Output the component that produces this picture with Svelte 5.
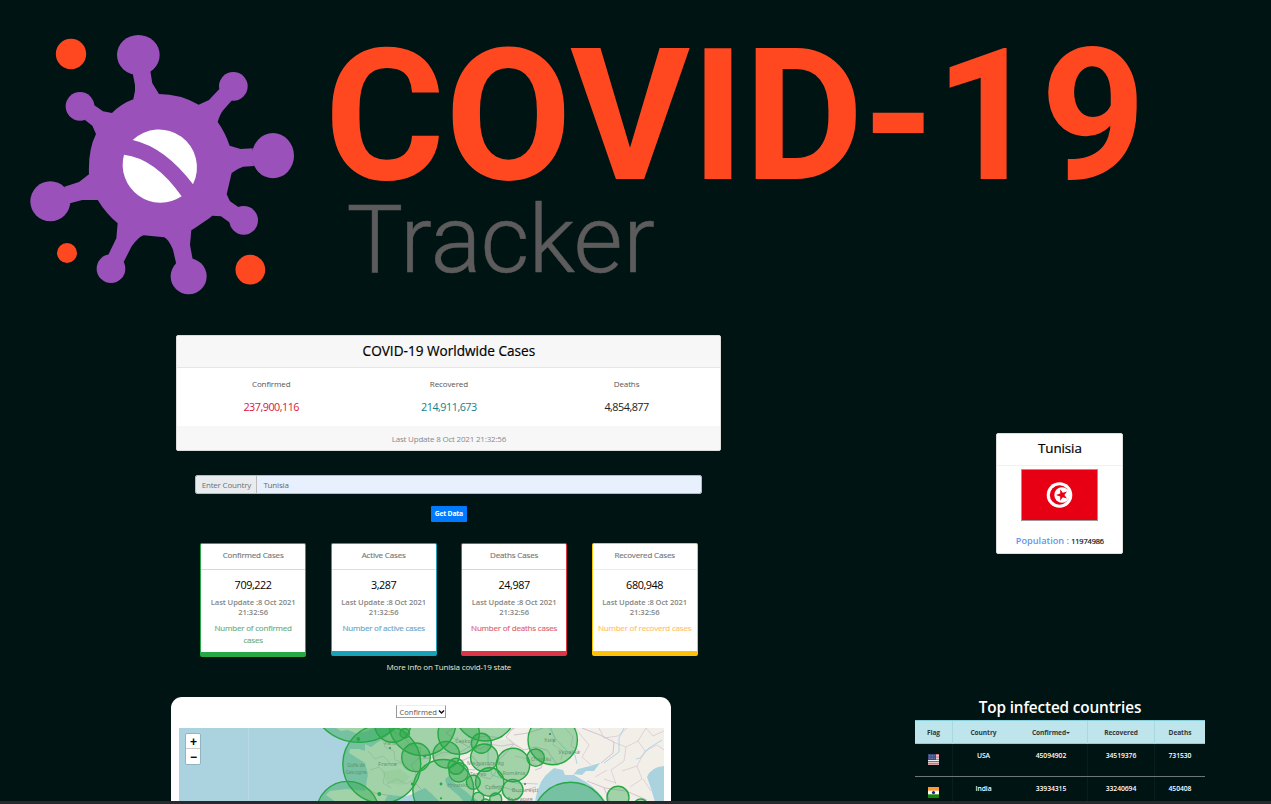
<script>
  const world = [
    { label: 'Confirmed', value: '237,900,116', tone: 'red' },
    { label: 'Recovered', value: '214,911,673', tone: 'teal' },
    { label: 'Deaths', value: '4,854,877', tone: 'dark' }
  ];
  const cards = [
    { title: 'Confirmed Cases', value: '709,222', note: 'Number of confirmed cases', tone: 'success' },
    { title: 'Active Cases', value: '3,287', note: 'Number of active cases', tone: 'info' },
    { title: 'Deaths Cases', value: '24,987', note: 'Number of deaths cases', tone: 'danger' },
    { title: 'Recovered Cases', value: '680,948', note: 'Number of recoverd cases', tone: 'warning' }
  ];
  const rows = [
    { flag: 'us', country: 'USA', confirmed: '45094902', recovered: '34519376', deaths: '731530' },
    { flag: 'in', country: 'India', confirmed: '33934315', recovered: '33240694', deaths: '450408' }
  ];
  // cx, cy, r
  const bubbles = [
    [359.3, 690.7, 51.6], [381.8, 764, 39], [347.7, 812.7, 31.3], [392.7, 724.3, 18], [422.3, 722, 33.6],
    [404.7, 733.3, 4.7], [416, 757.3, 14.3], [443.3, 790, 30.5], [458.7, 733.7, 20.7], [485.3, 710, 31],
    [446.3, 754.7, 13.3], [481.3, 743.3, 10], [484.3, 757.7, 13.7], [456, 766.3, 8], [458.7, 772.3, 9.7],
    [473.3, 782.3, 7], [478.3, 797.7, 5.5], [489.7, 782, 14.2], [495.7, 799, 6], [513, 765, 16.7],
    [512.7, 789.7, 10.3], [535.7, 757.7, 8.7], [552.7, 740, 24.7], [570.7, 820.3, 38], [618, 797.3, 11],
    [640.7, 806, 7], [485.5, 804, 5]
  ];
  const dots = [[358.3, 739, 1.9], [379.3, 794, 1.9], [424.7, 756.3, 1.4], [412.3, 784, 1.4], [441, 784, 1.4], [441, 798.3, 1.1]];
  const places = [
    ['France', 387.5, 765.5, 6], ['Paris', 390, 745, 5], ['Česko', 463, 743, 5.5], ['Magyarország', 485.5, 764.5, 5.5],
    ['România', 514, 775, 5.5], ['București', 525, 791.5, 6], ['Zagreb', 478, 775.5, 5], ['Hrvatska', 458, 787, 5],
    ['Србија', 494, 789, 5.5], ['Київ', 550, 741.5, 5.5], ['Україна', 569, 754, 5.8], ['Chișinău', 541, 761, 5],
    ['България', 520, 800.5, 5.5], ['Golfe de', 356, 767, 4.5], ['Gascogne', 356, 774, 4.5]
  ];
</script>

<div class="page">
  <header>
    <svg class="logo" viewBox="0 0 1271 335" width="1271" height="335" aria-label="COVID-19 Tracker">
      <g transform="translate(20 20) scale(.33333)">
        <g fill="#9a51ba">
          <path d="M338 160 L345 195 L345 212 L340 238 Q304 251 276 279 L249 274 L222 255 L195 300 L217 317 L228 342 Q204 390 207 463 L177 486 L133 500 L150 550 L187 540 H233 Q260 583 293 610 L289 655 L265 704 L311 726 L335 679 Q358 648 371 646 L433 652 Q445 657 459 689 L469 733 L518 718 L510 675 L514 631 C541 613 560 601 577 587 L603 589 L630 608 L655 561 L630 544 L620 523 L635 459 Q653 445 669 440 L702 438 L698 385 L662 387 L629 377 Q615 336 593 306 Q600 282 610 270 L636 241 L598 207 L567 240 L536 254 Q480 222 417 222 L397 190 L391 153 Z" />
          <ellipse cx="355" cy="105" rx="64" ry="60" /><circle cx="640" cy="199" r="43" />
          <ellipse cx="759" cy="407" rx="63" ry="68" />
          <circle cx="671" cy="601" r="43" /><circle cx="506" cy="769" r="54" />
          <circle cx="273" cy="746" r="43" /><circle cx="91" cy="544" r="60" />
          <circle cx="180" cy="259" r="43" />
        </g>
        <g fill="#ff4820">
          <circle cx="153" cy="102" r="45.5" /><circle cx="141" cy="699" r="30" /><circle cx="691" cy="749" r="44.5" />
        </g>
        <path d="M338 360 A114 114 0 0 1 519 493 Q435 382 338 360Z M312 404 Q405 415 485 529 A114 114 0 0 1 312 404Z" fill="#fff" />
      </g>
      <text class="brand" y="179" x="324.5 445 570 691 744 862.500 934.500 1040.500">COVID-19</text>
      <text class="sub" y="271.5" x="346.5 400 430.500 480.500 528.5 573.5 623">Tracker</text>
    </svg>
  </header>

  <main>
    <section class="left">
      <div class="world">
        <div class="world-head">COVID-19 Worldwide Cases</div>
        <div class="world-body">
          {#each world as w}
            <div class="stat"><span>{w.label}</span><b class={w.tone}>{w.value}</b></div>
          {/each}
        </div>
        <div class="world-foot">Last Update 8 Oct 2021 21:32:56</div>
      </div>
      <div class="search"><label for="country">Enter Country</label><div class="field" id="country">Tunisia</div></div>
      <button>Get Data</button>
      <div class="cards">
        {#each cards as c}
          <article class={c.tone}>
            <h3>{c.title}</h3>
            <div class="cbody">
              <strong>{c.value}</strong>
              <p class="upd">Last Update :8 Oct 2021 21:32:56</p>
              <p class="note">{c.note}</p>
            </div>
          </article>
        {/each}
      </div>
      <p class="more">More info on Tunisia covid-19 state</p>
    </section>
    <aside class="country">
      <h2>Tunisia</h2>
      <svg viewBox="0 0 77 52" width="77" height="52">
        <rect x=".5" y=".5" width="76" height="51" fill="#e70013" stroke="#999" />
        <circle cx="38.5" cy="26" r="12.8" fill="#fff" />
        <circle cx="38.5" cy="26" r="9.7" fill="#e70013" />
        <circle cx="41" cy="26" r="7.7" fill="#fff" />
        <path d="M35 26 L39.2 24.6 L39.2 20.2 L41.8 23.8 L46 22.4 L43.4 26 L46 29.6 L41.8 28.2 L39.2 31.8 L39.2 27.4Z" fill="#e70013" />
      </svg>
      <p><em>Population :</em> <span>11974986</span></p>
    </aside>
  </main>

  <div class="bottom">
    <section class="mapcard">
      <div class="select">Confirmed<svg width="7" height="6" viewBox="0 0 7 6"><path d="M1 1.5 L3.5 4 L6 1.5" fill="none" stroke="#111" stroke-width="1.5" /></svg></div>
      <div class="map">
        <svg viewBox="179 728 485 74" width="485" height="74">
          <rect x="179" y="728" width="485" height="74" fill="#aad3df" />
          <path d="M248.500 728V802" stroke="#b9dae4" stroke-width=".8" />
          <path fill="#f2efe9" d="M336 728 L341 731 L348 730 L355 733 L364 732 L374 728Z M378 742 L386 737 L392 732 L398 728 H664 V766 Q651 767 647 777 Q651 788 655 802 H606 Q598 790 586 782 Q577 777 573 774 L582 775 L586 771 L594 771 L600 763 L590 766 L578 769 L573 775 L565 775 L563 770 L554 768 L545 776 L541 782 L537 792 L535 802 H480 Q470 796 464 790 Q453 783 449 776 L445 779 L447 786 L459 796 L464 802 H440 L432 794 L425 788 L418 791 Q407 798 400 796 L388 795 L384 802 H336 L326 795 L330 791 L346 789 L365 791 L368 774 L365 763 L354 756 L349 753 L350 749 L359 749 L365 751 L365 744 L371 747Z" />
          <path fill="#e4eadb" d="M382 772 l18 -3 10 8 -8 8 -15 -2z M414 752 l22 -3 14 6 -20 5z M480 742l30 -3 10 8 -20 5z M398 745 l10 -6 8 6 -7 5z" />
          <g fill="none" stroke="#cdb5ca" stroke-width=".8">
            <path d="M393 731 L404 738 L411 745 L421 748 L419 758 L411 765 L416 773 L415 783 L421 789 M419 759 L432 758 L443 752 L457 754 L469 747 L480 749 L489 744 L502 746 L514 744 L524 750 L535 747 L545 758 L541 768 L535 770 M469 747 L458 741 L446 733 L453 728 M469 747 L475 738 L486 736 L501 738 L508 731 L515 728 M514 744 L506 737 L513 728 M472 756 L480 765 L493 765 L503 756 L514 744 M451 761 L464 760 L472 756 M463 769 L475 770 L480 765 M480 776 L490 779 L496 772 L493 765 M493 787 L503 786 L501 799 M503 787 L519 792 L536 787 M365 788 L375 793 L392 796 M535 747 L547 750 L558 766 M514 735 L528 733 L543 728 M601 763 L613 753 L614 742 L600 735 L582 728 M587 781 L605 788 L626 791 L647 800 M604 788 L610 802" />
            <path opacity=".65" d="M368 751 l7 8 8 -3 8 8 10 -1 5 7 M382 738 l3 9 9 4 1 9 9 3 M370 770 l9 -3 6 6 -2 10 8 5 M387 784 l10 -5 9 5 7 -4 M515 756 l13 3 9 7 M549 728 l6 9 -2 8 10 6 -2 9 M565 728 l8 9 -2 9 10 6 M575 728l14 17 -7 12 9 8 M599 728 l5 10 14 -2 9 -8 M613 742 l13 5 12 -6 8 -13 M626 747 l-2 14 -13 9 5 14 M638 741 l7 10 12 -6 7 5 M645 751 l-8 15 -15 5 M637 766 l5 13 -12 8 M607 770 l-12 7 M616 783l-12 -4 M643 779l8 12 M646 728l7 8 11 -5" />
          </g>
          <g fill="none" stroke="#9dd0df" stroke-width=".8"><path d="M551 728 L554 737 L567 751 L575 755 L577 764 M624 728 L619 738 L619 752 L604 763 M662 740 L649 748 L640 758 L636 759 M488 736 L488 761 L492 775 L516 783 L538 784" /></g>
          <g class="places">
            {#each places as p}<text x={p[1]} y={p[2]} font-size={p[3]}>{p[0]}</text>{/each}
          </g>
          <g fill="#666"><circle cx="390" cy="748" r="1" /><circle cx="550" cy="734" r="1.1" /><circle cx="525" cy="784" r="1" /></g>
          <g fill="#28a745" fill-opacity=".4" stroke="#28a745" stroke-width="1.4">
            {#each bubbles as b}<circle cx={b[0]} cy={b[1]} r={b[2]} />{/each}
          </g>
          <g fill="#28a745">{#each dots as d}<circle cx={d[0]} cy={d[1]} r={d[2]} />{/each}</g>
        </svg>
        <div class="zoom"><span>+</span><span>−</span></div>
      </div>
    </section>
    <section class="top">
      <h1>Top infected countries</h1>
      <div class="tr th"><span>Flag</span><span>Country</span><span>Confirmed<i></i></span><span>Recovered</span><span>Deaths</span></div>
      {#each rows as r}
        <div class="tr">
          <span class="fl">
            {#if r.flag === 'us'}
              <svg width="11" height="11" viewBox="0 0 11 11"><rect width="11" height="11" fill="#eee" /><path d="M0 .7H11M0 3H11M0 5.300H11M0 7.600H11M0 9.900H11" stroke="#c0525c" stroke-width="1.1" /><rect width="8" height="6" fill="#3c4b80" /><path d="M1 1.500H7M1 3H7M1 4.500H7" stroke="#9ca6c5" stroke-width=".6" stroke-dasharray=".8 .8" /></svg>
            {:else}
              <svg width="11" height="11" viewBox="0 0 11 11"><rect width="11" height="11" fill="#fff" /><rect width="11" height="3.700" fill="#ff9932" /><rect y="7.300" width="11" height="3.700" fill="#128807" /><circle cx="5.500" cy="5.500" r="1.600" fill="#1a1a8c" /></svg>
            {/if}
          </span>
          <span>{r.country}</span><span>{r.confirmed}</span><span>{r.recovered}</span><span>{r.deaths}</span>
        </div>
      {/each}
    </section>
  </div>
  <footer></footer>
</div>

<style>
  :global(body) { background: #001414; overflow: hidden; }
  .page { height: 804px; overflow: hidden; display: flex; flex-direction: column; background: #001414; font-family: "Open Sans", "Noto Sans", sans-serif; color: #212529; font-size: 8px; }
  .page * { box-sizing: border-box; }
  h1, h2, h3, p { margin: 0; font-weight: 400; }
  header { height: 335px; flex: none; }
  .logo { display: block; }
  .brand { font: 700 184px Roboto, sans-serif; fill: #ff4820; }
  .sub { font: 300 95px Roboto, sans-serif; fill: #5d5b5b; stroke: #5d5b5b; stroke-width: .5px; }
  main { height: 362px; flex: none; display: grid; grid-template-columns: 545px 127px; column-gap: 275px; padding-left: 176.400px; }
  .left { display: flex; flex-direction: column; align-items: center; }
  .world { width: 545px; height: 116px; background: #fff; border-radius: 2px; overflow: hidden; text-align: center; border: 1px solid #ddd; display: flex; flex-direction: column; }
  .world-head { height: 32px; line-height: 29px; background: #f7f7f7; border-bottom: 1px solid #e6e6e6; font-size: 13.600px; color: #000; -webkit-text-stroke: .2px; }
  .world-body { flex: 1; display: grid; grid-template-columns: repeat(3, 1fr); padding: 0 5px; }
  .stat { display: flex; flex-direction: column; padding-top: 9px; color: #555; }
  .stat span { line-height: 13px; font-size: 8px; letter-spacing: -.12px; }
  .stat b { font-weight: 400; font-size: 10.800px; line-height: 16px; margin-top: 9px; letter-spacing: -.5px; }
  .red { color: #dc143c; } .teal { color: #17808a; } .dark { color: #222; }
  .world-foot { height: 24px; line-height: 25px; background: #f7f7f7; color: #868a8e; font-size: 8px; letter-spacing: -.2px; }
  .search { width: 507px; height: 19px; margin-top: 24.400px; display: flex; border-radius: 2px; overflow: hidden; border: 1px solid #b5babf; line-height: 18px; font-size: 8px; letter-spacing: -.18px; color: #6b7178; }
  .search label { width: 61px; background: #e9ecef; border-right: 1px solid #bbb; text-align: center; }
  .field { flex: 1; background: #e8f0fe; padding-left: 6px; color: #666; }
  button { width: 36px; height: 16px; margin: 12px 0 0; padding: 0; border: 0; border-radius: 1px; background: #007bff; color: #fff; font: 700 6.800px/16px "Open Sans", sans-serif; letter-spacing: -.2px; }
  .cards { display: flex; gap: 24.500px; align-items: flex-start; margin-top: 20.600px; height: 114px; }
  article { width: 106px; background: #fff; border: 1px solid var(--c); border-bottom-width: 5px; border-radius: 2px; text-align: center; overflow: hidden; min-height: 113px; }
  article.success { --c: #28a745; --t: #6fae7e; --l: #c3e6cb; min-height: 114px; }
  article.info { --c: #17a2b8; --t: #6ba6c8; --l: #c5e8ed; }
  article.danger { --c: #dc3545; --t: #dc6670; --l: #f3c7cb; }
  article.warning { --c: #ffc107; --t: #ffc36b; --l: #ffeeb8; }
  h3 { height: 26px; line-height: 22px; border-bottom: 1px solid var(--l); font-size: 8px; letter-spacing: -.16px; color: #777; -webkit-text-stroke: .15px; }
  .cbody { padding: 7px 4px 0; }
  strong { display: block; font-weight: 400; font-size: 10.800px; line-height: 16px; color: #000; letter-spacing: -.4px; }
  .upd { line-height: 10px; font-size: 7.600px; font-weight: 600; letter-spacing: -.08px; color: #858585; padding: 4px 3px 0; }
  .note { margin: 5px -3px 0; padding: 0 4px; line-height: 12px; font-size: 8px; letter-spacing: -.2px; color: var(--t); -webkit-text-stroke: .15px; }
  .more { color: #f3e7d0; line-height: 12px; margin-top: 4.500px; font-size: 8px; letter-spacing: -.17px; }
  .country { margin-top: 98.400px; width: 127px; height: 121px; background: #fff; border-radius: 2px; text-align: center; border: 1px solid #ddd; }
  h2 { height: 32px; line-height: 29px; border-bottom: 1px solid #f1f1f1; font-size: 13.400px; letter-spacing: -.1px; color: #000; -webkit-text-stroke: .2px; }
  .country svg { display: block; margin: 2.500px auto 0 24px; }
  .country p { margin-top: 12px; line-height: 16px; white-space: nowrap; }
  em { font-style: normal; font-size: 9.200px; color: #6495ed; font-weight: 600; }
  .country p span { font-size: 7.400px; letter-spacing: -.12px; color: #111; -webkit-text-stroke: .2px; }
  .bottom { height: 104px; flex: none; padding-left: 171.400px; display: flex; gap: 243.600px; overflow: hidden; }
  .mapcard { width: 500px; height: 140px; margin-top: .4px; background: #fff; border-radius: 11px 11px 0 0; padding: 8px 7.500px 0; }
  .select { width: 50px; height: 13px; margin: 0 auto; border: 1px solid #999; border-top-color: #eee; font-size: 7.600px; line-height: 12px; padding-left: 2px; white-space: nowrap; color: #555; display: flex; align-items: center; gap: 1px; }
  .map { margin-top: 9.600px; position: relative; }
  .map > svg { display: block; }
  .places { fill: #76736f; text-anchor: middle; font-family: "Noto Sans", sans-serif; opacity: .8; }
  .zoom { position: absolute; left: 6px; top: 5px; width: 16px; height: 32px; border: 1px solid #91b4be; border-radius: 2px; background: #fff; color: #000; display: flex; flex-direction: column; font: 700 12px/17px "Liberation Sans", sans-serif; text-align: center; }
  .zoom span { height: 15px; padding-left: 1px; } .zoom span:first-child { border-bottom: 1px solid #ccc; }
  .top { width: 290px; color: #fff; text-align: center; font-weight: 600; font-size: 6.800px; letter-spacing: -.08px; }
  h1 { font-size: 15.300px; font-weight: 600; line-height: 21px; height: 23px; letter-spacing: -.13px; }
  .tr { display: grid; grid-template-columns: 38px 62px 73px 67px 50px; height: 33px; line-height: 23px; border-bottom: 1px solid #6b7777; }
  .th { height: 24px; background: #bee5eb; color: #32383e; line-height: 23px; font-weight: 700; font-size: 6.600px; border: 1px solid #86cfda; border-width: 1px 0; }
  .tr span { border-right: 1px solid #0b1e1e; }
  .th span { border-color: #a9d9e0; padding: 0; }
  .tr span:last-child { border: 0; } .tr span:nth-child(2) { border-color: transparent; }
  i { display: inline-block; border: 2px solid transparent; border-top-color: #32383e; border-bottom: 0; vertical-align: 1px; }
  .fl svg { display: block; margin: 10px auto 0; }
  footer { height: 3px; flex: none; background: #28282d; }
</style>
